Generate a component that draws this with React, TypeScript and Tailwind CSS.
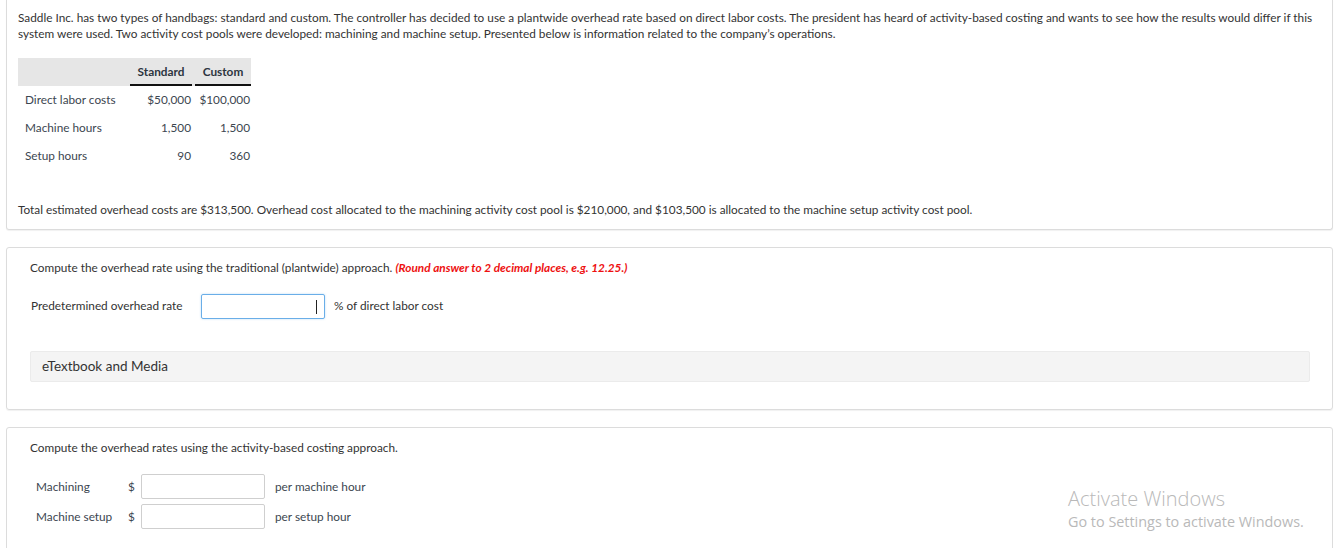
import React from "react";

export default function App() {
  return (
    <div className="relative w-[1341px] h-[548px] overflow-hidden bg-white text-[11.8px] text-[#333] font-['Lato','Open_Sans',sans-serif]">
      <div className="flex flex-col gap-[17px] pl-[6px] pr-[8px]">
        {/* Card 1 */}
        <div className="border border-t-0 border-[#dcdcdc] rounded-b-[3px] shadow-[0_1px_1px_rgba(0,0,0,0.06)] pl-[11px] pr-[12px] pt-[10px] pb-[11px]">
          <p className="leading-[16px]">
            Saddle Inc. has two types of handbags: standard and custom. The controller has decided to use a plantwide overhead rate based on direct labor costs. The president has heard of activity-based costing and wants to see how the results would differ if this system were used. Two activity cost pools were developed: machining and machine setup. Presented below is information related to the company’s operations.
          </p>
          <div className="mt-[16px] w-[233px]">
            <div className="flex h-[28px] bg-[#e6e6e6] font-bold text-[#2c3540]">
              <div className="w-[112px]" />
              <div className="w-[62px] flex items-center justify-center border-b-2 border-[#111] mt-[1px] pt-[1px]">Standard</div>
              <div className="w-[3px]" />
              <div className="w-[56px] flex items-center justify-center border-b-2 border-[#111] mt-[1px] pt-[1px]">Custom</div>
            </div>
            {[
              ["Direct labor costs", "$50,000", "$100,000"],
              ["Machine hours", "1,500", "1,500"],
              ["Setup hours", "90", "360"],
            ].map(([a, b, c]) => (
              <div key={a} className="flex h-[28px] items-center text-[#3c4650]">
                <div className="w-[112px] pl-[7px]">{a}</div>
                <div className="w-[62px] text-right pr-[1px]">{b}</div>
                <div className="w-[3px]" />
                <div className="w-[56px] text-right pr-[1px]">{c}</div>
              </div>
            ))}
          </div>
          <p className="mt-[32px] leading-[16px]">
            Total estimated overhead costs are $313,500. Overhead cost allocated to the machining activity cost pool is $210,000, and $103,500 is allocated to the machine setup activity cost pool.
          </p>
        </div>

        {/* Card 2 */}
        <div className="border border-[#dcdcdc] rounded-[3px] shadow-[0_1px_1px_rgba(0,0,0,0.06)] pl-[23px] pr-[22px] pt-[12px] pb-[27px]">
          <p className="leading-[16px]">
            Compute the overhead rate using the traditional (plantwide) approach.{" "}
            <span className="text-[#ee1111] italic font-bold">(Round answer to 2 decimal places, e.g. 12.25.)</span>
          </p>
          <div className="mt-[17px] flex items-center h-[26px]">
            <span className="pl-[1px] w-[171px]">Predetermined overhead rate</span>
            <div className="relative w-[124px] h-[25px] border border-[#6aaee8] rounded-[2px] shadow-[0_0_2px_rgba(102,175,233,0.5)]">
              <span className="absolute right-[7px] top-[5px] w-px h-[14px] bg-[#222]" />
            </div>
            <span className="ml-[9px]">% of direct labor cost</span>
          </div>
          <div className="mt-[32px] h-[31px] bg-[#f4f4f4] border border-[#ebebeb] rounded-[2px] flex items-center pl-[11px] text-[13.5px] text-[#333]">
            eTextbook and Media
          </div>
        </div>

        {/* Card 3 */}
        <div className="border border-[#dcdcdc] rounded-t-[3px] pl-[23px] pr-[22px] pt-[12px] h-[200px]">
          <p className="leading-[16px]">Compute the overhead rates using the activity-based costing approach.</p>
          <div className="mt-[18px] flex flex-col gap-[5px]">
            {[
              ["Machining", "per machine hour"],
              ["Machine setup", "per setup hour"],
            ].map(([a, b]) => (
              <div key={a} className="flex items-center h-[25px] text-[#3c4650]">
                <span className="pl-[6px] w-[98px]">{a}</span>
                <span className="w-[13px]">$</span>
                <div className="w-[124px] h-[25px] border border-[#cfcfcf] rounded-[2px]" />
                <span className="ml-[10px]">{b}</span>
              </div>
            ))}
          </div>
        </div>
      </div>

      {/* Activate Windows watermark */}
      <div className="absolute left-[1068px] top-[486px] text-[#b9b9b9] font-['Open_Sans','Noto_Sans',sans-serif]">
        <div className="text-[20px] leading-[26px] font-light">Activate Windows</div>
        <div className="text-[14.4px] leading-[20px]">Go to Settings to activate Windows.</div>
      </div>
    </div>
  );
}
